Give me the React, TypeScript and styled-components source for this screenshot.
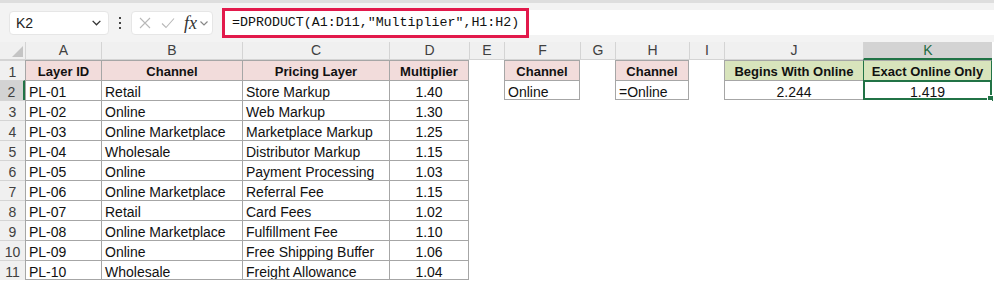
import styled, { createGlobalStyle, css } from "styled-components"

const GlobalStyle = createGlobalStyle`
    body {
        margin: 0;
        background: #ffffff;
        font-family: "Liberation Sans", Arial, sans-serif;
    }
`

const Page = styled.div`
    width: 994px;
    height: 282px;
    overflow: hidden;
    background: #ffffff;
`

const Toolbar = styled.div`
    height: 42px;
    box-sizing: border-box;
    background: #f3f3f3;
    border-top: 3px solid #dedede;
    display: flex;
    align-items: center;
    padding-left: 9px;
`

const NameBox = styled.div`
    width: 100px;
    height: 24px;
    box-sizing: border-box;
    background: #ffffff;
    border: 1px solid #e6e6e6;
    border-radius: 4px;
    display: flex;
    align-items: center;
    justify-content: space-between;
    padding: 0 6px 0 6px;
    font-size: 14px;
    color: #222222;
`

const Dots = styled.div`
    width: 22px;
    display: flex;
    justify-content: center;
`

const FxBox = styled.div`
    width: 82px;
    height: 24px;
    box-sizing: border-box;
    background: #ffffff;
    border: 1px solid #e6e6e6;
    border-radius: 4px;
    display: flex;
    align-items: center;
    padding-left: 6px;
    gap: 8px;
`

const FxLabel = styled.span`
    font-family: "Liberation Serif", "Times New Roman", serif;
    font-style: italic;
    font-size: 18px;
    line-height: 18px;
    color: #333333;
    margin-left: 0px;
    margin-right: -6px;
`

const FormulaBar = styled.div`
    flex: 1;
    height: 25px;
    margin-left: 9px;
    background: #ffffff;
    display: flex;
    align-items: center;
`

const Highlight = styled.div`
    width: 307px;
    height: 30px;
    box-sizing: border-box;
    border: 3px solid #e2194b;
    display: flex;
    align-items: center;
    padding-left: 7px;
    font-family: "Liberation Mono", "Courier New", monospace;
    font-size: 13.3px;
    color: #111111;
    white-space: nowrap;
`

const Sheet = styled.div`
    display: grid;
    grid-template-columns: 25px 76px 141px 147px 80px 35px 76px 35px 74px 35px 139px 129px;
    grid-template-rows: 18px repeat(11, 20px);
`

const Corner = styled.div`
    background: #f0f0f0;
    border-bottom: 1px solid #d4d4d4;
    display: flex;
    align-items: flex-end;
    justify-content: flex-end;
    padding: 0 2px 2px 0;
`

const ColHead = styled.div<{ $active?: boolean }>`
    box-sizing: border-box;
    background: ${p => p.$active ? '#d3d3d3' : '#f0f0f0'};
    color: ${p => p.$active ? '#1e6b40' : '#404040'};
    border-left: 1px solid #d4d4d4;
    border-bottom: ${p => p.$active ? '2px solid #217346' : '1px solid #d4d4d4'};
    font-size: 14px;
    line-height: 17px;
    text-align: center;
`

const RowHead = styled.div<{ $active?: boolean }>`
    box-sizing: border-box;
    background: ${p => p.$active ? '#d3d3d3' : '#f0f0f0'};
    color: #404040;
    border-top: 1px solid #d4d4d4;
    border-right: ${p => p.$active ? '2px solid #217346' : '0'};
    font-size: 14px;
    line-height: 16px;
    padding-top: 3px;
    text-align: center;
`

type Fill = 'pink' | 'green' | 'none'

const fills: Record<Fill, string> = {
    pink: '#f2dcdb',
    green: '#d8e4bc',
    none: '#ffffff',
}

const line = '#a6a6a6'

const Cell = styled.div<{
    $fill: Fill;
    $bold?: boolean;
    $center?: boolean;
    $t?: boolean;
    $l?: boolean;
    $r?: boolean;
    $b?: boolean;
}>`
    position: relative;
    box-sizing: border-box;
    background: ${p => fills[p.$fill]};
    border-top: 1px solid ${p => p.$t ? line : 'transparent'};
    border-left: 1px solid ${p => p.$l ? line : 'transparent'};
    ${p => p.$r && css`border-right: 1px solid ${line};`}
    ${p => p.$b && css`border-bottom: 1px solid ${line};`}
    font-size: ${p => p.$bold ? '13px' : '14px'};
    font-weight: ${p => p.$bold ? 700 : 400};
    color: #111111;
    line-height: 16px;
    padding: 3px 3px 0 3px;
    text-align: ${p => p.$center ? 'center' : 'left'};
    white-space: nowrap;
    overflow: hidden;
`

const SelectedCell = styled(Cell)`
    overflow: visible;
    border: 2px solid #217346;
    padding-top: 2px;
`

const HeaderOutline = styled(Cell)`
    border-left: 1px solid #217346;
    border-right: 1px solid #217346;
`

const FillHandle = styled.span`
    position: absolute;
    right: -4px;
    bottom: -4px;
    width: 5px;
    height: 5px;
    background: #217346;
    border: 1px solid #ffffff;
`

const Chevron = ({ size = 10, color = '#444' }: { size?: number; color?: string }) => (
    <svg width={size} height={size} viewBox="0 0 10 10">
        <polyline points="1.5,3.5 5,7 8.5,3.5" fill="none" stroke={color} strokeWidth="1.2" />
    </svg>
)

const layers = [
    ['PL-01', 'Retail', 'Store Markup', '1.40'],
    ['PL-02', 'Online', 'Web Markup', '1.30'],
    ['PL-03', 'Online Marketplace', 'Marketplace Markup', '1.25'],
    ['PL-04', 'Wholesale', 'Distributor Markup', '1.15'],
    ['PL-05', 'Online', 'Payment Processing', '1.03'],
    ['PL-06', 'Online Marketplace', 'Referral Fee', '1.15'],
    ['PL-07', 'Retail', 'Card Fees', '1.02'],
    ['PL-08', 'Online Marketplace', 'Fulfillment Fee', '1.10'],
    ['PL-09', 'Online', 'Free Shipping Buffer', '1.06'],
    ['PL-10', 'Wholesale', 'Freight Allowance', '1.04'],
]

const columns = ['A', 'B', 'C', 'D', 'E', 'F', 'G', 'H', 'I', 'J', 'K']

// tables on the sheet: [firstRow, lastRow, firstCol, lastCol]
const tables = [
    [1, 11, 0, 3],
    [1, 2, 5, 5],
    [1, 2, 7, 7],
    [1, 2, 9, 10],
]

function cellValue(r: number, c: number): string {
    if (r === 1) {
        const heads: Record<number, string> = {
            0: 'Layer ID', 1: 'Channel', 2: 'Pricing Layer', 3: 'Multiplier',
            5: 'Channel', 7: 'Channel', 9: 'Begins With Online', 10: 'Exact Online Only',
        }
        return heads[c] ?? ''
    }
    if (c <= 3) return layers[r - 2][c]
    if (r === 2) {
        const vals: Record<number, string> = { 5: 'Online', 7: '=Online', 9: '2.244', 10: '1.419' }
        return vals[c] ?? ''
    }
    return ''
}

function cellFill(r: number, c: number): Fill {
    if (r !== 1) return 'none'
    if (c <= 3 || c === 5 || c === 7) return 'pink'
    if (c === 9 || c === 10) return 'green'
    return 'none'
}

function SheetCell({ r, c }: { r: number; c: number }) {
    const t = tables.find(([r0, r1, c0, c1]) => r >= r0 && r <= r1 && c >= c0 && c <= c1)
    const props = {
        $fill: cellFill(r, c),
        $bold: r === 1,
        $center: r === 1 || c === 3 || c === 9 || c === 10,
        $t: !!t,
        $l: !!t,
        $r: !!t && c === t[3],
        $b: !!t && r === t[1],
    }
    const value = cellValue(r, c)
    if (r === 2 && c === 10) {
        return (
            <SelectedCell {...props}>
                {value}
                <FillHandle />
            </SelectedCell>
        )
    }
    if (r === 1 && c === 10) return <HeaderOutline {...props}>{value}</HeaderOutline>
    return <Cell {...props}>{value}</Cell>
}

export default function App() {
    const rows = Array.from({ length: 11 }, (_, i) => i + 1)
    return (
        <Page>
            <GlobalStyle />
            <Toolbar>
                <NameBox>
                    <span>K2</span>
                    <Chevron size={11} color="#333" />
                </NameBox>
                <Dots>
                    <svg width="4" height="14" viewBox="0 0 4 14">
                        <rect x="1" y="1" width="2" height="2" fill="#444" />
                        <rect x="1" y="6" width="2" height="2" fill="#444" />
                        <rect x="1" y="11" width="2" height="2" fill="#444" />
                    </svg>
                </Dots>
                <FxBox>
                    <svg width="14" height="14" viewBox="0 0 14 14">
                        <path d="M2 2 L12 12 M12 2 L2 12" stroke="#b8b8b8" strokeWidth="1.1" fill="none" />
                    </svg>
                    <svg width="16" height="14" viewBox="0 0 16 14">
                        <polyline points="2,7.5 6,11.5 14,2.5" stroke="#b8b8b8" strokeWidth="1.1" fill="none" />
                    </svg>
                    <FxLabel>fx</FxLabel>
                    <Chevron size={10} color="#888" />
                </FxBox>
                <FormulaBar>
                    <Highlight>=DPRODUCT(A1:D11,"Multiplier",H1:H2)</Highlight>
                </FormulaBar>
            </Toolbar>
            <Sheet>
                <Corner>
                    <svg width="11" height="11" viewBox="0 0 11 11">
                        <polygon points="11,0 11,11 0,11" fill="#c4c4c4" />
                    </svg>
                </Corner>
                {columns.map((col, c) => (
                    <ColHead key={col} $active={c === 10}>{col}</ColHead>
                ))}
                {rows.map(r => [
                    <RowHead key={`h${r}`} $active={r === 2}>{r}</RowHead>,
                    ...columns.map((col, c) => <SheetCell key={`${col}${r}`} r={r} c={c} />),
                ])}
            </Sheet>
        </Page>
    )
}
